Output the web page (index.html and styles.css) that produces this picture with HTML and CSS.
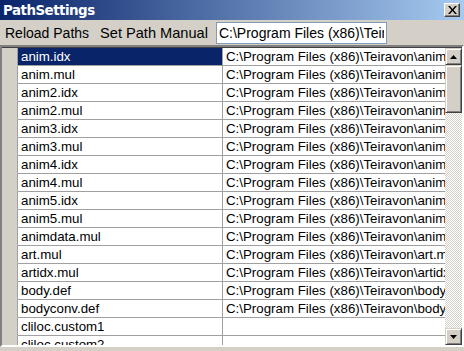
FILE: index.html
```
<!DOCTYPE html>
<html>
  <head>
    <title>PathSettings</title>
    <link rel="stylesheet" href="styles.css">
  </head>
  <body>
    <div class="window">
      <div class="titlebar">
        <span class="title">PathSettings</span>
        <span class="close">
          <svg width="9" height="8" viewBox="0 0 9 8"><path d="M0 0h2l2.5 3 2.5-3h2L5.5 4 9 8H7L4.5 5 2 8H0l3.5-4z" fill="#000"/></svg>
        </span>
      </div>
      <div class="toolbar">
        <span class="tool">Reload Paths</span>
        <span class="tool">Set Path Manual</span>
        <input class="pathbox" type="text" value="C:\Program Files (x86)\Teiravon\">
      </div>
      <div class="grid">
        <div class="rows">
          <div class="row selected"><span class="head"></span><span class="name">anim.idx</span><span class="path">C:\Program Files (x86)\Teiravon\anim.idx</span></div>
          <div class="row"><span class="head"></span><span class="name">anim.mul</span><span class="path">C:\Program Files (x86)\Teiravon\anim.mul</span></div>
          <div class="row"><span class="head"></span><span class="name">anim2.idx</span><span class="path">C:\Program Files (x86)\Teiravon\anim2.idx</span></div>
          <div class="row"><span class="head"></span><span class="name">anim2.mul</span><span class="path">C:\Program Files (x86)\Teiravon\anim2.mul</span></div>
          <div class="row"><span class="head"></span><span class="name">anim3.idx</span><span class="path">C:\Program Files (x86)\Teiravon\anim3.idx</span></div>
          <div class="row"><span class="head"></span><span class="name">anim3.mul</span><span class="path">C:\Program Files (x86)\Teiravon\anim3.mul</span></div>
          <div class="row"><span class="head"></span><span class="name">anim4.idx</span><span class="path">C:\Program Files (x86)\Teiravon\anim4.idx</span></div>
          <div class="row"><span class="head"></span><span class="name">anim4.mul</span><span class="path">C:\Program Files (x86)\Teiravon\anim4.mul</span></div>
          <div class="row"><span class="head"></span><span class="name">anim5.idx</span><span class="path">C:\Program Files (x86)\Teiravon\anim5.idx</span></div>
          <div class="row"><span class="head"></span><span class="name">anim5.mul</span><span class="path">C:\Program Files (x86)\Teiravon\anim5.mul</span></div>
          <div class="row"><span class="head"></span><span class="name">animdata.mul</span><span class="path">C:\Program Files (x86)\Teiravon\animdata.mul</span></div>
          <div class="row"><span class="head"></span><span class="name">art.mul</span><span class="path">C:\Program Files (x86)\Teiravon\art.mul</span></div>
          <div class="row"><span class="head"></span><span class="name">artidx.mul</span><span class="path">C:\Program Files (x86)\Teiravon\artidx.mul</span></div>
          <div class="row"><span class="head"></span><span class="name">body.def</span><span class="path">C:\Program Files (x86)\Teiravon\body.def</span></div>
          <div class="row"><span class="head"></span><span class="name">bodyconv.def</span><span class="path">C:\Program Files (x86)\Teiravon\bodyconv.def</span></div>
          <div class="row"><span class="head"></span><span class="name">cliloc.custom1</span><span class="path"></span></div>
          <div class="row"><span class="head"></span><span class="name">cliloc.custom2</span><span class="path"></span></div>
        </div>
        <div class="scrollbar">
          <span class="sbtn"><svg width="7" height="4" viewBox="0 0 7 4"><path d="M3.5 0L7 4H0z" fill="#000"/></svg></span>
          <span class="thumb"></span>
          <span class="track"></span>
          <span class="sbtn"><svg width="7" height="4" viewBox="0 0 7 4"><path d="M0 0h7L3.5 4z" fill="#000"/></svg></span>
        </div>
      </div>
    </div>
  </body>
</html>
```

FILE: styles.css
```
body {
  margin: 0;
  background: #d4d0c8;
  font-family: "Liberation Sans", Arial, sans-serif;
  font-size: 13.3px;
}

.window {
  width: 464px;
  height: 351px;
  background: #d4d0c8;
  display: flex;
  flex-direction: column;
  overflow: hidden;
}

.titlebar {
  height: 20px;
  flex: none;
  display: flex;
  align-items: center;
  justify-content: space-between;
  padding: 0 4px 0 3px;
  background: linear-gradient(to right, #0a246a, #a6caf0);
}

.title {
  color: white;
  font-weight: bold;
  font-size: 13.4px;
  font-family: "DejaVu Sans", sans-serif;
  letter-spacing: -0.5px;
}

.close {
  width: 16px;
  height: 14px;
  box-sizing: border-box;
  background: #d4d0c8;
  border: 1px solid;
  border-color: #fff #404040 #404040 #fff;
  box-shadow: inset -1px -1px #808080;
  display: flex;
  align-items: center;
  justify-content: center;
}

.toolbar {
  height: 25px;
  flex: none;
  display: flex;
  align-items: center;
  padding-left: 1px;
}

.tool {
  font-size: 14px;
  padding: 0 7px 0 4px;
  color: #000;
}

.tool + .tool {
  font-size: 14.6px;
  padding-right: 8px;
}

.pathbox {
  width: 171px;
  height: 22px;
  box-sizing: border-box;
  border: 1px solid #7f9db9;
  padding: 0 2px;
  font-family: "Liberation Sans", Arial, sans-serif;
  font-size: 14px;
  color: #000;
}

.grid {
  flex: 1;
  display: flex;
  border: 2px solid;
  border-color: #808080 #fff #fff #808080;
  box-shadow: inset 1px 1px #404040;
  margin-bottom: 4px;
  overflow: hidden;
  padding-top: 1px;
}

.rows {
  flex: 1;
  overflow: hidden;
}

.row {
  display: flex;
  height: 18px;
  line-height: 17px;
  background: #fff;
}

.head {
  width: 15px;
  flex: none;
  background: #d4d0c8;
  border-right: 1px solid #a0a0a0;
  border-bottom: 1px solid #d4d0c8;
}

.name, .path {
  box-sizing: border-box;
  padding-left: 3px;
  border-right: 1px solid #a0a0a0;
  border-bottom: 1px solid #a0a0a0;
  white-space: nowrap;
  overflow: hidden;
}

.name {
  width: 205px;
  flex: none;
}

.path {
  flex: 1;
  border-right: none;
}

.selected .name {
  background: #0a246a;
  color: #fff;
}

.scrollbar {
  width: 17px;
  flex: none;
  display: flex;
  flex-direction: column;
}

.sbtn, .thumb {
  height: 17px;
  flex: none;
  box-sizing: border-box;
  background: #d4d0c8;
  border: 1px solid;
  border-color: #d4d0c8 #404040 #404040 #d4d0c8;
  box-shadow: inset 1px 1px #fff, inset -1px -1px #808080;
  display: flex;
  align-items: center;
  justify-content: center;
}

.thumb {
  height: 48px;
}

.track {
  flex: 1;
  background: repeating-conic-gradient(#fff 0 25%, #d4d0c8 0 50%) 0 0 / 2px 2px;
}
```
